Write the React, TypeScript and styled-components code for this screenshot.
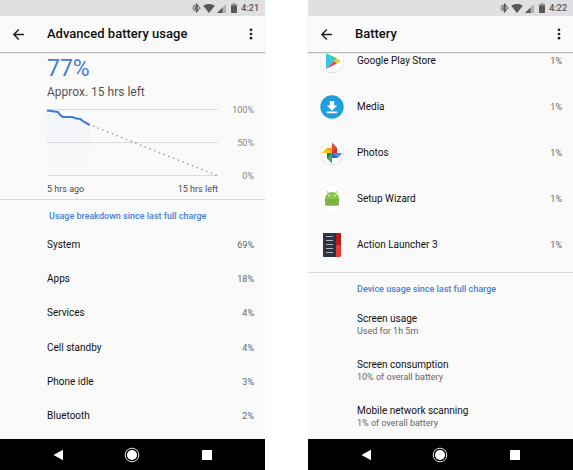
import React from "react";
import styled, { createGlobalStyle } from "styled-components";

const GlobalStyle = createGlobalStyle`
  * { box-sizing: border-box; }
  body {
    margin: 0;
    background: #fff;
    color: #1c1c1c;
    font-family: Roboto, "Liberation Sans", sans-serif;
    font-size: 10px;
  }
  button { font: inherit; color: inherit; background: none; border: 0; padding: 0; cursor: pointer; }
  h1, h2, p, ul { margin: 0; padding: 0; }
  ul { list-style: none; }
  svg { display: block; flex: none; }
`;

const Page = styled.main`
  display: grid;
  grid-template-columns: 1fr 1fr;
  gap: 43px;
  height: 100vh;
`;

const Phone = styled.section`
  display: flex;
  flex-direction: column;
  min-width: 0;
  min-height: 0;
  background: #fafafa;
`;

const StatusBar = styled.div`
  display: flex;
  align-items: center;
  justify-content: flex-end;
  flex: none;
  height: 16px;
  padding-right: 6px;
  background: #e0e0e0;
  color: #585858;
`;

const StatusIcons = styled.div`
  display: flex;
  align-items: center;
  gap: 2px;
  margin-right: 1px;
`;

const Clock = styled.time`
  font-size: 9px;
  font-weight: 500;
  line-height: 16px;
`;

const AppBar = styled.header`
  display: flex;
  align-items: center;
  flex: none;
  height: 36px;
  padding: 0 8px 0 12px;
  background: #fafafa;
  box-shadow: 0 1px 1px rgba(0, 0, 0, 0.28);
  z-index: 1;
`;

const IconButton = styled.button`
  display: grid;
  place-items: center;
  width: 13px;
  height: 24px;
`;

const Title = styled.h1`
  flex: 1;
  margin-left: 22px;
  font-size: 13px;
  line-height: 18px;
  font-weight: 500;
  color: #101010;
  white-space: nowrap;
`;

const Content = styled.div`
  display: flex;
  flex-direction: column;
  flex: 1;
  min-height: 0;
  overflow: hidden;
`;

const Summary = styled.div`
  padding: 3px 11px 4px 47px;
  border-bottom: 1px solid #dadada;
`;

const Level = styled.p`
  font-size: 23px;
  line-height: 28px;
  color: #4080d8;
`;

const Remaining = styled.p`
  font-size: 12px;
  line-height: 18px;
  color: #555;
`;

const ChartRow = styled.div`
  display: flex;
  gap: 8px;
  padding-top: 3px;
`;

const ChartArea = styled.div`
  flex: 1;
  min-width: 0;
  padding-top: 4px;
`;

const Plot = styled.svg`
  width: 100%;
  height: 70px;
`;

const Levels = styled.div`
  display: flex;
  flex-direction: column;
  justify-content: space-between;
  height: 78px;
  width: 28px;
  font-size: 9px;
  line-height: 12px;
  text-align: right;
  color: #858585;
`;

const TimeAxis = styled.div`
  display: flex;
  justify-content: space-between;
  padding-top: 5px;
  font-size: 9px;
  line-height: 12px;
  color: #4c4c4c;
`;

const SectionTitle = styled.h2`
  padding: 10px 10px 5px 49px;
  font-size: 9px;
  line-height: 13px;
  font-weight: 500;
  color: #4583d7;
  white-space: nowrap;
`;

const Breakdown = styled.ul`
  display: grid;
  grid-auto-rows: 1fr;
  flex: 1;
  padding-bottom: 6px;
`;

const Row = styled.button`
  display: flex;
  align-items: center;
  width: 100%;
  height: 100%;
  padding: 0 11px 0 47px;
  text-align: left;
`;

const AppList = styled.ul`
  margin-top: -14px;
  padding-bottom: 4px;
  border-bottom: 1px solid #dadada;
`;

const AppRow = styled(Row)`
  gap: 13px;
  height: 46px;
  padding-left: 12px;
`;

const Label = styled.span`
  flex: 1;
  font-size: 10px;
  line-height: 14px;
  color: #111;
`;

const Percent = styled.span`
  font-size: 9px;
  line-height: 14px;
  color: #666;
`;

const UsageItem = styled.button`
  display: flex;
  flex-direction: column;
  width: 100%;
  height: 46px;
  padding: 11px 10px 0 49px;
  text-align: left;
`;

const UsageName = styled.span`
  font-size: 10px;
  line-height: 13px;
  color: #111;
`;

const UsageDetail = styled.span`
  font-size: 9px;
  line-height: 12px;
  color: #666;
`;

const NavBar = styled.nav`
  display: grid;
  grid-template-columns: repeat(3, 1fr);
  flex: none;
  height: 31px;
  padding: 0 21px;
  background: #000;
`;

const NavButton = styled.button`
  display: grid;
  place-items: center;
`;

const Bluetooth = () => (
  <svg width="9" height="10" viewBox="2 1 20 22" fill="currentColor" stroke="currentColor" strokeWidth=".8">
    <path d="M17.71 7.71 12 2h-1v7.59L6.41 5 5 6.41 10.59 12 5 17.59 6.41 19 11 14.41V22h1l5.71-5.71-4.3-4.29zM13 5.83l1.88 1.88L13 9.59zm1.88 10.46L13 18.17v-3.76zM7 12l-2-2-2 2 2 2zm12-2-2 2 2 2 2-2z" />
  </svg>
);

const Wifi = () => (
  <svg width="12" height="9" viewBox="0 0 24 18" fill="currentColor">
    <path d="M12 18 .4 3.6C3.8 1.2 7.7 0 12 0s8.200 1.200 11.600 3.600z" />
  </svg>
);

const Signal = () => (
  <svg width="9" height="9" viewBox="0 0 18 18" fill="currentColor">
    <path d="M0 18 18 0v18z" opacity=".35" />
    <path d="M0 18 11 7v11z" />
  </svg>
);

const BatteryLevel = () => (
  <svg width="12" height="10" viewBox="0 0 24 20" fill="currentColor">
    <path d="M9.500 0h5v2H18v3.500H6V2h3.500z" opacity=".55" />
    <path d="M6 5h12v13.500Q18 20 16.500 20h-9Q6 20 6 18.500z" />
  </svg>
);

const BackArrow = () => (
  <svg width="13" height="13" viewBox="0 0 13 13" fill="none" stroke="#222" strokeWidth="1.400">
    <path d="M12 6.500H2M6.800 1.500l-5 5 5 5" />
  </svg>
);

const MoreDots = () => (
  <svg width="4" height="12" viewBox="0 0 4 12" fill="#222">
    <circle cx="2" cy="1.800" r="1.350" />
    <circle cx="2" cy="6" r="1.350" />
    <circle cx="2" cy="10.200" r="1.350" />
  </svg>
);

const Disc = ({ children }: { children: React.ReactNode }) => (
  <svg width="24" height="24" viewBox="0 0 24 24">
    <circle cx="12" cy="12.300" r="11.700" fill="#000" opacity=".14" />
    <circle cx="12" cy="11.900" r="11.300" fill="#fff" />
    {children}
  </svg>
);

const PlayStore = () => (
  <Disc>
    <path d="M6 4v16l8-8z" fill="#35c5e8" />
    <path d="M6 4l8 8 3-2.600z" fill="#2fce8b" />
    <path d="M6 20l8-8 3 2.600z" fill="#e8434d" />
    <path d="M17 9.400 14 12l3 2.600L21 12z" fill="#fbc02d" />
  </Disc>
);

const Media = () => (
  <svg width="24" height="24" viewBox="0 0 24 24">
    <circle cx="12" cy="12" r="11.700" fill="#209fdc" />
    <path d="M9.800 6h4.400v4.500h3L12 15.700l-5.200-5.200h3zM6.800 16.500h10.400v1.800H6.800z" fill="#fff" />
  </svg>
);

const Photos = () => (
  <Disc>
    <path d="M12 1.500 17 6.500V12h-5z" fill="#e8453c" />
    <path d="M12 12 17 6.500V12z" fill="#c5372c" />
    <path d="M22.500 12 17.500 17H12v-5z" fill="#4a86ee" />
    <path d="M12 12l5.500 5H12z" fill="#2b62c4" />
    <path d="M12 22.500 7 17.500V12h5z" fill="#3aaf5c" />
    <path d="M12 12 7 17.500V12z" fill="#1d8746" />
    <path d="M1.500 12 6.500 7H12v5z" fill="#fcc41c" />
    <path d="M12 12 6.500 7H12z" fill="#ef9f1a" />
  </Disc>
);

const Android = () => (
  <svg width="24" height="24" viewBox="0 0 24 24">
    <circle cx="12" cy="12" r="12" fill="#fff" />
    <path d="M5 11.500a7 6.500 0 0 1 14 0V17a1.500 1.500 0 0 1-1.500 1.500h-11A1.500 1.500 0 0 1 5 17z" fill="#8bc34a" />
    <path d="M5 12h14v5a1.500 1.500 0 0 1-1.500 1.500h-11A1.500 1.500 0 0 1 5 17z" fill="#7cb342" />
    <path d="M8.500 6.500 7 4M15.500 6.500 17 4" stroke="#8bc34a" strokeWidth=".8" strokeLinecap="round" />
    <circle cx="9" cy="8.800" r=".8" fill="#fff" />
    <circle cx="15" cy="8.800" r=".8" fill="#fff" />
  </svg>
);

const ActionLauncher = () => (
  <svg width="24" height="24" viewBox="0 0 24 24">
    <rect x="3" y="0" width="18" height="24" rx="1.200" fill="#e53935" />
    <path d="M16 0h3.800Q21 0 21 1.200V12h-5z" fill="#b71c1c" />
    <path d="M4.200 0H16v24H4.200Q3 24 3 22.800V1.200Q3 0 4.200 0z" fill="#2b3640" />
    <path d="M6 3.500h7M6 7.500h7M6 11.500h7M6 15.500h7M6 19.500h7" stroke="#a9b1b7" />
  </svg>
);

function TopBars({ time, title }: { time: string; title: string }) {
  return (
    <>
      <StatusBar>
        <StatusIcons>
          <Bluetooth />
          <Wifi />
          <Signal />
          <BatteryLevel />
        </StatusIcons>
        <Clock>{time}</Clock>
      </StatusBar>
      <AppBar>
        <IconButton aria-label="Back"><BackArrow /></IconButton>
        <Title>{title}</Title>
        <IconButton aria-label="More options"><MoreDots /></IconButton>
      </AppBar>
    </>
  );
}

function BottomBar() {
  return (
    <NavBar>
      <NavButton aria-label="Back">
        <svg width="10" height="12" viewBox="0 0 10 12" fill="#fff"><path d="M10 .800v10.400L.500 6z" /></svg>
      </NavButton>
      <NavButton aria-label="Home">
        <svg width="16" height="16" viewBox="0 0 16 16" fill="#fff">
          <circle cx="8" cy="8" r="6.800" fill="none" stroke="#fff" strokeWidth=".9" />
          <circle cx="8" cy="8" r="5" />
        </svg>
      </NavButton>
      <NavButton aria-label="Recent apps">
        <svg width="10" height="10" viewBox="0 0 10 10" fill="#fff"><rect width="10" height="10" rx=".5" /></svg>
      </NavButton>
    </NavBar>
  );
}

const breakdown = [
  ["System", "69%"],
  ["Apps", "18%"],
  ["Services", "4%"],
  ["Cell standby", "4%"],
  ["Phone idle", "3%"],
  ["Bluetooth", "2%"],
];

const apps = [
  { name: "Google Play Store", Icon: PlayStore },
  { name: "Media", Icon: Media },
  { name: "Photos", Icon: Photos },
  { name: "Setup Wizard", Icon: Android },
  { name: "Action Launcher 3", Icon: ActionLauncher },
];

const usage = [
  ["Screen usage", "Used for 1h 5m"],
  ["Screen consumption", "10% of overall battery"],
  ["Mobile network scanning", "1% of overall battery"],
];

export default function App() {
  return (
    <>
      <GlobalStyle />
      <Page>
        <Phone>
          <TopBars time="4:21" title="Advanced battery usage" />
          <Content>
            <Summary>
              <Level>77%</Level>
              <Remaining>Approx. 15 hrs left</Remaining>
              <ChartRow>
                <ChartArea>
                  <Plot viewBox="0 0 172 70" preserveAspectRatio="none" role="img" aria-label="Battery level over time">
                    <defs>
                      <linearGradient id="fade" x1="0" y1="0" x2="0" y2="1">
                        <stop offset="0" stopColor="#4080d8" stopOpacity=".05" />
                        <stop offset="1" stopColor="#4080d8" stopOpacity="0" />
                      </linearGradient>
                    </defs>
                    <path d="M0 1.500h172M0 34.500h172M0 67.500h172" stroke="#dcdcdc" />
                    <path d="M0 3l12 1 4 5h10l7 3 3 1 7 4v50H0z" fill="url(#fade)" />
                    <path d="M46 18 172 68" fill="none" stroke="#a8a8a8" strokeWidth="1.600" strokeDasharray="1.600 3.500" />
                    <path d="M0 2.500 11 4q2 3.500 5 5h9.500l4 1.500 4 .5 3 2.500 6.500 3.500" fill="none" stroke="#3c7bd6" strokeWidth="2" />
                  </Plot>
                  <TimeAxis>
                    <span>5 hrs ago</span>
                    <span>15 hrs left</span>
                  </TimeAxis>
                </ChartArea>
                <Levels>
                  <span>100%</span>
                  <span>50%</span>
                  <span>0%</span>
                </Levels>
              </ChartRow>
            </Summary>
            <SectionTitle>Usage breakdown since last full charge</SectionTitle>
            <Breakdown>
              {breakdown.map(([name, value]) => (
                <li key={name}>
                  <Row>
                    <Label>{name}</Label>
                    <Percent>{value}</Percent>
                  </Row>
                </li>
              ))}
            </Breakdown>
          </Content>
          <BottomBar />
        </Phone>
        <Phone>
          <TopBars time="4:22" title="Battery" />
          <Content>
            <AppList>
              {apps.map(({ name, Icon }) => (
                <li key={name}>
                  <AppRow>
                    <Icon />
                    <Label>{name}</Label>
                    <Percent>1%</Percent>
                  </AppRow>
                </li>
              ))}
            </AppList>
            <SectionTitle>Device usage since last full charge</SectionTitle>
            <ul>
              {usage.map(([name, detail]) => (
                <li key={name}>
                  <UsageItem>
                    <UsageName>{name}</UsageName>
                    <UsageDetail>{detail}</UsageDetail>
                  </UsageItem>
                </li>
              ))}
            </ul>
          </Content>
          <BottomBar />
        </Phone>
      </Page>
    </>
  );
}
